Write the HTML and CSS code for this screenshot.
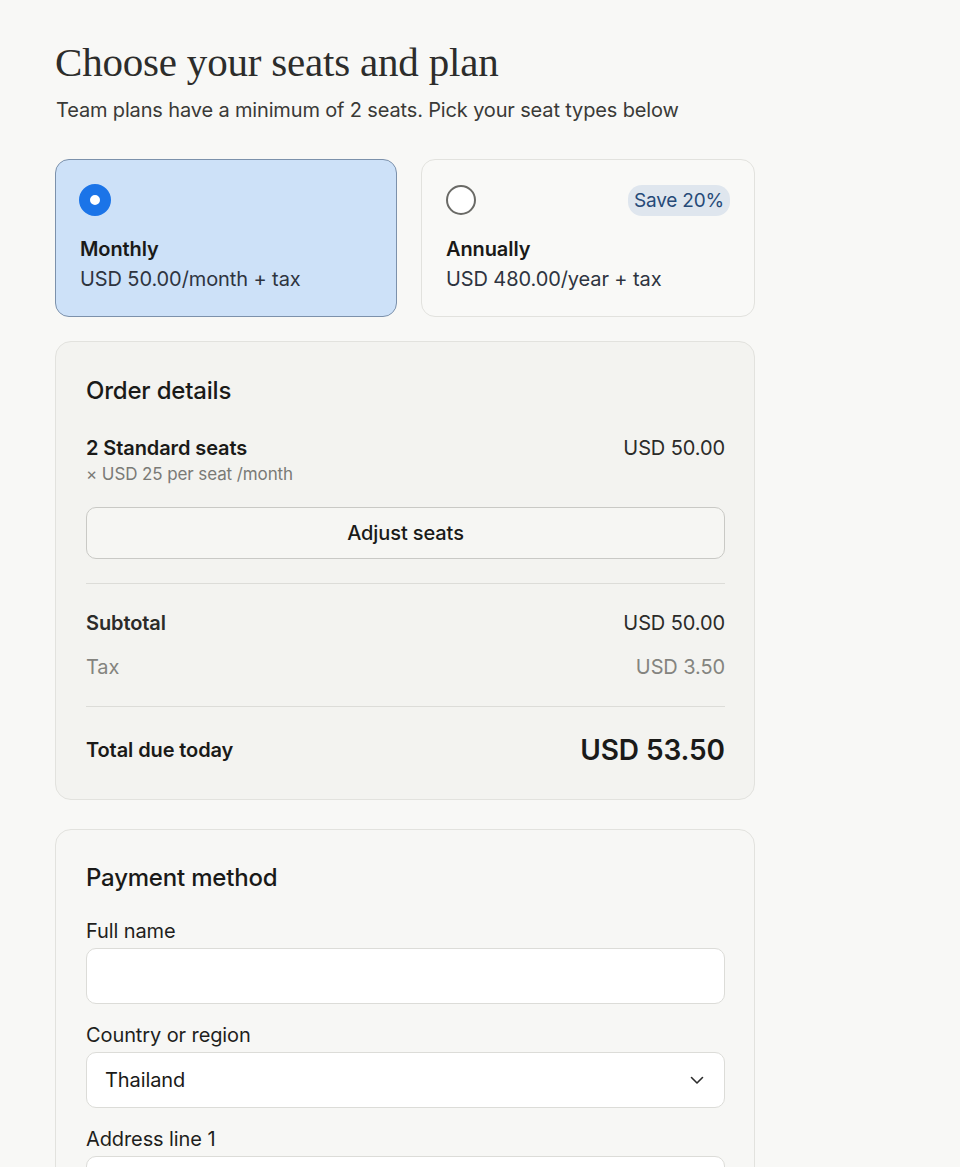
FILE: index.html
```html
<!DOCTYPE html>
<html lang="en">
<head>
    <meta charset="UTF-8">
    <meta name="viewport" content="width=device-width, initial-scale=1.0">
    <title>Choose your seats and plan</title>
    <link rel="stylesheet" href="styles.css">
</head>
<body>
    <main class="checkout">
        <h1>Choose your seats and plan</h1>
        <p class="lead">Team plans have a minimum of 2 seats. Pick your seat types below</p>

        <!-- Billing period -->
        <div class="plans">
            <label class="plan selected">
                <div class="plan-top">
                    <span class="radio checked"></span>
                </div>
                <div class="plan-name">Monthly</div>
                <div class="plan-price">USD 50.00/month + tax</div>
            </label>
            <label class="plan">
                <div class="plan-top">
                    <span class="radio"></span>
                    <span class="badge">Save 20%</span>
                </div>
                <div class="plan-name">Annually</div>
                <div class="plan-price">USD 480.00/year + tax</div>
            </label>
        </div>

        <!-- Order details -->
        <section class="card order">
            <h2>Order details</h2>
            <div class="row seats-row">
                <div>
                    <div class="seats">2 Standard seats</div>
                    <div class="per-seat">× USD 25 per seat /month</div>
                </div>
                <div class="amount">USD 50.00</div>
            </div>
            <button class="adjust">Adjust seats</button>
            <hr>
            <div class="row subtotal">
                <span>Subtotal</span>
                <span class="amount">USD 50.00</span>
            </div>
            <div class="row tax">
                <span>Tax</span>
                <span>USD 3.50</span>
            </div>
            <hr>
            <div class="row total">
                <span>Total due today</span>
                <span class="total-amount">USD 53.50</span>
            </div>
        </section>

        <!-- Payment -->
        <section class="card payment">
            <h2>Payment method</h2>
            <label class="field-label">Full name</label>
            <div class="input"></div>
            <label class="field-label">Country or region</label>
            <div class="input select">
                <span>Thailand</span>
                <svg width="18" height="18" viewBox="0 0 18 18" fill="none">
                    <path d="M3.5 6.5 L9 12 L14.5 6.5" stroke="#2b2b2b" stroke-width="1.6" stroke-linecap="round" stroke-linejoin="round"/>
                </svg>
            </div>
            <label class="field-label">Address line 1</label>
            <div class="input"></div>
        </section>
    </main>
</body>
</html>
```

FILE: styles.css
```css
body {
    margin: 0;
    background-color: #f8f8f6;
    font-family: 'Inter', sans-serif;
    color: #2b2b29;
}

.checkout {
    width: 700px;
    padding: 39px 0 0 55px;
}

h1 {
    font-family: 'Liberation Serif', serif;
    font-weight: 400;
    font-size: 41px;
    line-height: 46px;
    margin: 0;
    color: #2d2d2b;
    letter-spacing: -0.2px;
}

.lead {
    font-size: 20px;
    margin: 13px 0 0 1px;
    color: #3a3a37;
    letter-spacing: -0.15px;
}

.plans {
    display: grid;
    grid-template-columns: 342px 334px;
    gap: 24px;
    margin-top: 37px;
}

.plan {
    border: 1px solid #e2e2de;
    border-radius: 14px;
    background: #f9f9f7;
    padding: 23px 24px 26px 24px;
    height: 158px;
    box-sizing: border-box;
}

.plan.selected {
    background: #cde1f8;
    border-color: #7c91ab;
}

.plan-top {
    display: flex;
    justify-content: space-between;
    align-items: center;
    height: 34px;
}

.radio {
    width: 30px;
    height: 30px;
    border: 2px solid #6a6a66;
    border-radius: 50%;
    background: #fff;
    box-sizing: border-box;
    margin-left: 0;
}

.radio.checked {
    width: 32px;
    height: 32px;
    border: 11px solid #1b74e8;
    margin-left: -1px;
}

.badge {
    background: #dfe6ee;
    color: #264a78;
    font-size: 19px;
    padding: 4px 6px;
    border-radius: 14px;
    letter-spacing: -0.2px;
}

.plan-name {
    font-size: 20px;
    font-weight: 600;
    color: #1a1a18;
    margin-top: 20px;
    letter-spacing: -0.1px;
}

.plan-price {
    font-size: 20px;
    color: #2e3440;
    margin-top: 6px;
    letter-spacing: -0.1px;
}

.card {
    border: 1px solid #e2e2de;
    border-radius: 16px;
    padding: 30px 29px 30px 30px;
    margin-top: 24px;
}

.order {
    background: #f3f3f0;
    padding-bottom: 32px;
}

.payment {
    background: #f7f7f5;
    margin-top: 29px;
    padding-top: 29px;
}

h2 {
    font-size: 24px;
    font-weight: 500;
    margin: 4px 0 0 0;
    color: #1a1a18;
    letter-spacing: -0.2px;
}

.row {
    display: flex;
    justify-content: space-between;
    align-items: center;
    font-size: 20px;
    letter-spacing: -0.1px;
}

.seats-row {
    align-items: flex-start;
    margin-top: 31px;
}

.seats {
    font-weight: 600;
    color: #1a1a18;
}

.per-seat {
    font-size: 17px;
    color: #7a7a76;
    margin-top: 4px;
}

.amount {
    color: #2b2b29;
}

.adjust {
    display: block;
    width: 100%;
    height: 52px;
    margin-top: 23px;
    border: 1px solid #c9c9c5;
    border-radius: 10px;
    background: #f6f6f3;
    font-family: 'Inter', sans-serif;
    font-size: 20px;
    font-weight: 500;
    color: #1a1a18;
    letter-spacing: -0.1px;
}

hr {
    border: none;
    border-top: 1px solid #dcdcd8;
    margin: 24px 0 0 0;
}

.subtotal {
    margin-top: 27px;
    font-weight: 600;
}

.subtotal .amount {
    font-weight: 400;
}

.tax {
    margin-top: 20px;
    color: #84847f;
}

.tax + hr {
    margin-top: 27px;
}

.total {
    margin-top: 26px;
    font-weight: 600;
    color: #1a1a18;
}

.total-amount {
    font-size: 28px;
    font-weight: 600;
}

.field-label {
    display: block;
    font-size: 20px;
    color: #1f1f1d;
    margin-top: 19px;
    letter-spacing: -0.1px;
}

.payment h2 + .field-label {
    margin-top: 27px;
}

.input {
    height: 54px;
    margin-top: 5px;
    background: #fff;
    border: 1px solid #dcdcd8;
    border-radius: 10px;
}

.select {
    display: flex;
    justify-content: space-between;
    align-items: center;
    padding: 0 18px;
    font-size: 20px;
    color: #1a1a18;
    letter-spacing: -0.1px;
}
```
